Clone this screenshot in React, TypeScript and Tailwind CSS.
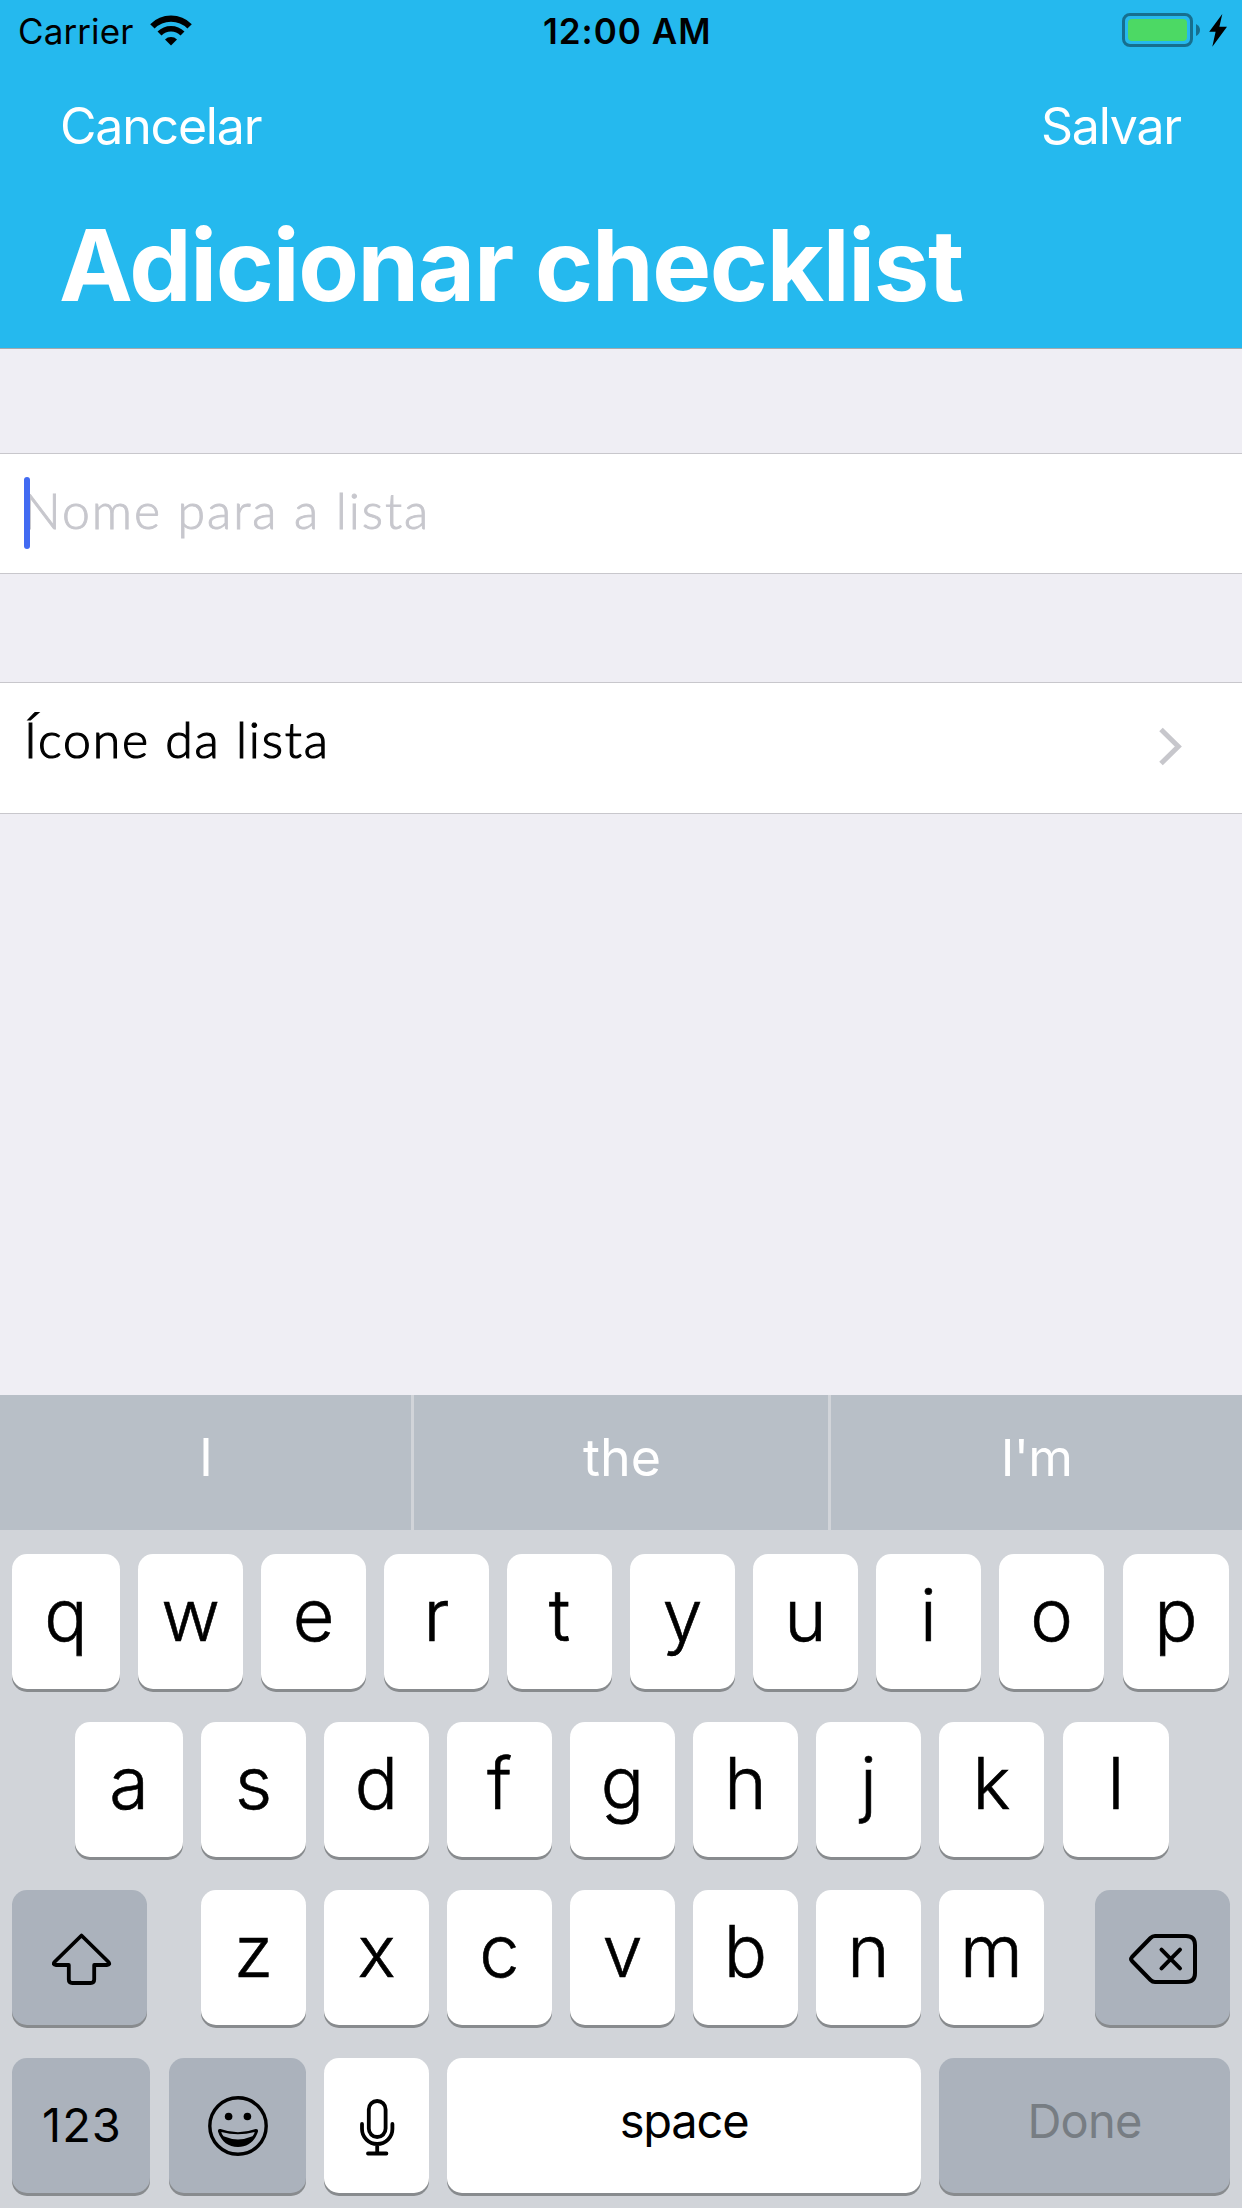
import type { ReactNode } from "react";

function WifiIcon() {
  return (
    <svg width="42" height="31" viewBox="0 0 42 31" fill="none">
      <path d="M2.4 11.4A26.3 26.3 0 0 1 39.6 11.4" stroke="#000" strokeWidth="6.2" />
      <path d="M9.5 18.5A16.3 16.3 0 0 1 32.5 18.5" stroke="#000" strokeWidth="5.6" />
      <path d="M15 24.4A8.5 8.5 0 0 1 27 24.4L21 30.5Z" fill="#000" />
    </svg>
  );
}

function BatteryIcon() {
  return (
    <svg width="105" height="34" viewBox="0 0 105 34">
      <rect x="1.5" y="1.5" width="68" height="31" rx="6.5" fill="none" stroke="#000" strokeOpacity="0.4" strokeWidth="3" />
      <rect x="6" y="6" width="59" height="22" rx="4" fill="#4cd964" />
      <path d="M74 11Q78 13 78 17T74 23Z" fill="#000" fillOpacity="0.4" />
      <path d="M100.3 1L87.2 18.8H93.6L90.3 33.800L105 13.800H97.4Z" fill="#000" />
    </svg>
  );
}

function ChevronIcon() {
  return (
    <svg width="24" height="39" viewBox="0 0 24 39" fill="none">
      <path d="M3 2.5L20.3 19.5L3 36.5" stroke="#c7c7cc" strokeWidth="5" />
    </svg>
  );
}

function ShiftIcon() {
  return (
    <svg width="60" height="54" viewBox="0 0 60 54" fill="none" stroke="#000" strokeWidth="3.8" strokeLinejoin="round">
      <path d="M29.5 3.5L56.5 30Q58.5 33 55 33H42.2V47.5Q42.2 51 38.7 51H20.3Q16.8 51 16.8 47.5V33H4Q.5 33 2.5 30Z" />
    </svg>
  );
}

function DeleteIcon() {
  return (
    <svg width="68" height="50" viewBox="0 0 68 50" fill="none" stroke="#000" strokeWidth="4" strokeLinecap="round" strokeLinejoin="round">
      <path d="M26 2H57Q66 2 66 11V39Q66 48 57 48H26Q23.5 48 21.5 46L3 27Q1.2 25 3 23L21.5 4Q23.5 2 26 2Z" />
      <path d="M32.5 15.7L51 34.3M51 15.7L32.5 34.3" />
    </svg>
  );
}

function SmileIcon() {
  return (
    <svg width="60" height="60" viewBox="0 0 60 60">
      <circle cx="30" cy="30" r="28.2" fill="none" stroke="#000" strokeWidth="3.4" />
      <circle cx="20.6" cy="20.5" r="3.8" />
      <circle cx="39.4" cy="20.5" r="3.8" />
      <path d="M12.5 33Q30 39.5 47.5 33Q50.5 32.5 50 35.5C46.5 46 39.5 51 30 51S13.5 46 10 35.5Q9.5 32.5 12.5 33Z" />
      <path d="M13.3 36Q30 40.7 46.7 36Q46.3 38.5 44.5 40.3Q30 46.5 15.5 40.3Q13.7 38.5 13.3 36Z" fill="#abb2bc" />
    </svg>
  );
}

function MicIcon() {
  return (
    <svg width="35" height="57" viewBox="0 0 35 57" fill="none" stroke="#000" strokeWidth="3.8" strokeLinecap="round">
      <rect x="8.8" y="2" width="16.8" height="36" rx="8.4" />
      <path d="M2 25V30A15.2 15 0 0 0 32.4 30V25M17.2 45V54M8 54.5H26.4" />
    </svg>
  );
}

function Key({ className = "", dark = false, children }: { className?: string; dark?: boolean; children: ReactNode }) {
  return (
    <div
      className={`flex h-[135px] shrink-0 items-center justify-center rounded-[15px] shadow-[0_3px_0_#888b8e] ${
        dark ? "bg-[#abb2bc]" : "bg-white"
      } ${className}`}
    >
      {children}
    </div>
  );
}

function Letter({ char, className = "w-[105px]" }: { char: string; className?: string }) {
  return (
    <Key className={className}>
      <span className="pb-[13px] text-[72px] leading-none font-light [-webkit-text-stroke:0.6px_#000]">{char}</span>
    </Key>
  );
}

export default function App() {
  return (
    <div className="flex h-[2208px] w-[1242px] flex-col overflow-hidden bg-[#efeef4] font-['Inter',sans-serif] text-black">
      <header className="h-[349px] shrink-0 border-b border-[#a5a9ad] bg-[#25b9ee]">
        <div className="flex h-[62px] items-center text-[35px] leading-none">
          <div className="flex w-[543px] items-center gap-[17px] pl-[18px]">
            <span className="tracking-[0.1px]">Carrier</span>
            <div className="pb-[2px]">
              <WifiIcon />
            </div>
          </div>
          <span className="font-semibold tracking-[1px]">12:00 AM</span>
          <div className="ml-auto pr-[15px] pb-[2px]">
            <BatteryIcon />
          </div>
        </div>
        <nav className="flex h-[128px] items-center justify-between pr-[61px] pl-[60px] text-[50px] leading-none tracking-[-1.2px] text-white">
          <span>Cancelar</span>
          <span>Salvar</span>
        </nav>
        <h1 className="flex h-[150px] items-center pl-[59px] text-[99px] leading-none font-bold tracking-[-1.35px] text-white">
          Adicionar checklist
        </h1>
      </header>

      <main className="flex-1 pt-[104px] font-['Lato',sans-serif] text-[50px] leading-none font-light">
        <div className="relative flex h-[121px] items-center border-y border-[#c8c7cc] bg-white pb-[8px] pl-[23px]">
          <span className="tracking-[1.95px] text-[#c7c7cd] [-webkit-text-stroke:0.9px_#c7c7cd]">Nome para a lista</span>
          <span className="absolute top-[23px] left-[24px] h-[72px] w-[6px] rounded-[3px] bg-[#426bf2]" />
        </div>
        <div className="mt-[108px] flex h-[132px] items-center justify-between border-y border-[#c8c7cc] bg-white pr-[60px] pl-[24px]">
          <span className="pb-[19px] tracking-[1.8px] [-webkit-text-stroke:1.2px_#000]">Ícone da lista</span>
          <div className="pb-[3px]">
            <ChevronIcon />
          </div>
        </div>
      </main>

      <footer className="h-[813px] shrink-0 bg-[#d1d4d9]">
        <div className="flex h-[135px] gap-[3px] text-[52px] leading-none text-white">
          <div className="flex w-[411px] items-center justify-center bg-[#b8bfc7] pb-[10px] pl-[1px]">I</div>
          <div className="flex w-[414px] items-center justify-center bg-[#b8bfc7] pb-[10px] pl-[2px]">the</div>
          <div className="flex w-[411px] items-center justify-center bg-[#b8bfc7] pb-[11px] text-[51px] tracking-[-0.7px]">I'm</div>
        </div>
        <div className="flex flex-col gap-[33px] pt-[24px]">
          <div className="flex gap-[18px] pl-[12px]">
            <Letter char="q" className="w-[108px]" />
            {[..."wertyuio"].map((c) => (
              <Letter key={c} char={c} />
            ))}
            <Letter char="p" className="ml-px w-[106px]" />
          </div>
          <div className="flex gap-[18px] pl-[75px]">
            <Letter char="a" className="w-[108px]" />
            {[..."sdfghjk"].map((c) => (
              <Letter key={c} char={c} />
            ))}
            <Letter char="l" className="ml-px w-[106px]" />
          </div>
          <div className="flex justify-between px-[12px]">
            <Key dark className="w-[135px] pt-[3px] pl-[5px]">
              <ShiftIcon />
            </Key>
            <div className="flex gap-[18px] pl-[3px]">
              {[..."zxcvbnm"].map((c) => (
                <Letter key={c} char={c} />
              ))}
            </div>
            <Key dark className="w-[135px] pt-[3px]">
              <DeleteIcon />
            </Key>
          </div>
          <div className="flex pl-[12px] text-[47px] leading-none">
            <Key dark className="w-[138px] pb-[2px] pl-[2px] tracking-[1px]">123</Key>
            <Key dark className="ml-[19px] w-[137px]">
              <SmileIcon />
            </Key>
            <Key className="ml-[18px] w-[105px] pt-[3px] pl-[2px]">
              <MicIcon />
            </Key>
            <Key className="ml-[18px] w-[474px] pb-[10px] tracking-[-1.2px]">space</Key>
            <Key dark className="ml-[18px] w-[291px] pb-[10px] tracking-[-0.8px] text-[#777d83]">Done</Key>
          </div>
        </div>
      </footer>
    </div>
  );
}
